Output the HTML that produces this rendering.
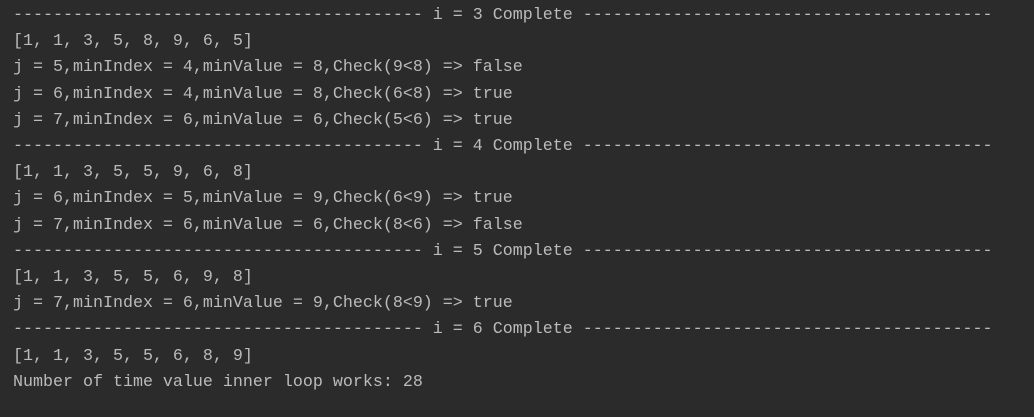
<!DOCTYPE html>
<html><head><style>
html,body{margin:0;padding:0;background:#2b2b2b;width:1034px;height:417px;overflow:hidden}
pre{margin:0;padding:3px 0 0 13px;font-family:"Liberation Mono",monospace;font-size:16.67px;line-height:26.2px;color:#bbbbbb}
</style></head><body><pre>----------------------------------------- i = 3 Complete -----------------------------------------
[1, 1, 3, 5, 8, 9, 6, 5]
j = 5,minIndex = 4,minValue = 8,Check(9&lt;8) =&gt; false
j = 6,minIndex = 4,minValue = 8,Check(6&lt;8) =&gt; true
j = 7,minIndex = 6,minValue = 6,Check(5&lt;6) =&gt; true
----------------------------------------- i = 4 Complete -----------------------------------------
[1, 1, 3, 5, 5, 9, 6, 8]
j = 6,minIndex = 5,minValue = 9,Check(6&lt;9) =&gt; true
j = 7,minIndex = 6,minValue = 6,Check(8&lt;6) =&gt; false
----------------------------------------- i = 5 Complete -----------------------------------------
[1, 1, 3, 5, 5, 6, 9, 8]
j = 7,minIndex = 6,minValue = 9,Check(8&lt;9) =&gt; true
----------------------------------------- i = 6 Complete -----------------------------------------
[1, 1, 3, 5, 5, 6, 8, 9]
Number of time value inner loop works: 28</pre></body></html>
